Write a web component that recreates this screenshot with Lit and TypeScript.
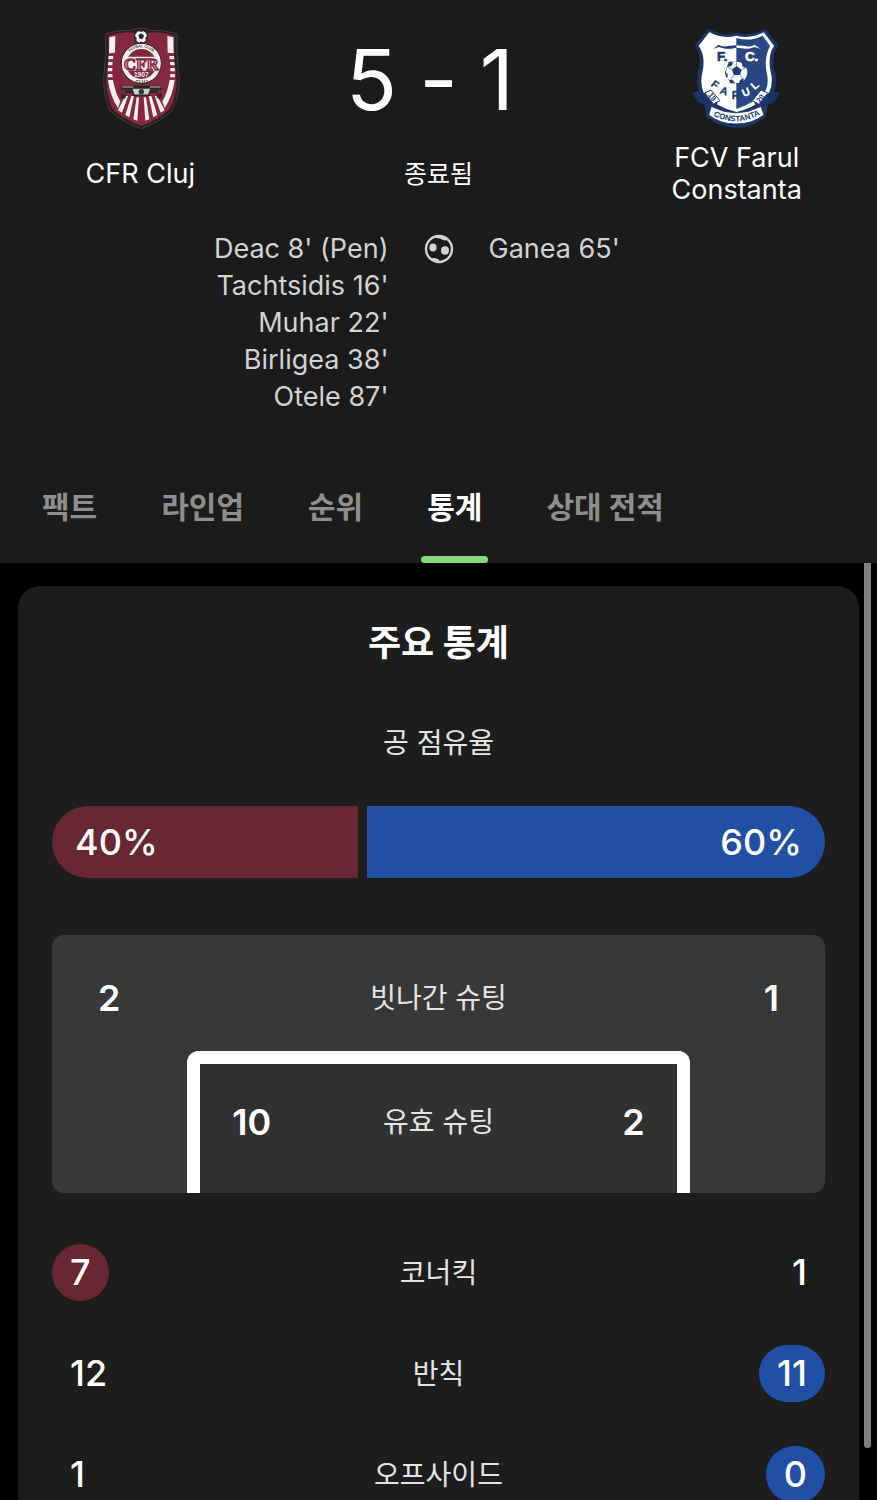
import { LitElement, html, css } from "lit";
import { customElement, property, state } from "lit/decorators.js";
import { classMap } from "lit/directives/class-map.js";

interface Stat {
  label: string;
  home: number;
  away: number;
  leader: "home" | "away";
}

const HOME_SCORERS = ["Deac 8' (Pen)", "Tachtsidis 16'", "Muhar 22'", "Birligea 38'", "Otele 87'"];
const AWAY_SCORERS = ["Ganea 65'"];
const TABS = ["팩트", "라인업", "순위", "통계", "상대 전적"];
const POSSESSION = { home: 40, away: 60 };
const STATS: Stat[] = [
  { label: "코너킥", home: 7, away: 1, leader: "home" },
  { label: "반칙", home: 12, away: 11, leader: "away" },
  { label: "오프사이드", home: 1, away: 0, leader: "away" },
];

const clujCrest = html`
  <svg width="100" height="120" viewBox="0 0 300 360" role="img" aria-label="CFR Cluj">
    <path d="M46 42Q90 28 120 32Q152 16 184 32Q214 28 262 42Q258 90 265 150Q276 215 246 272Q210 306 154 326Q96 306 60 272Q34 215 43 150Q50 90 46 42Z" fill="#2a1f22" stroke="#55494c" stroke-width="2"/>
    <path d="M54 48Q92 34 130 38L176 38Q214 34 254 48Q250 94 257 152Q267 212 240 266Q206 298 154 318Q100 298 67 266Q42 212 51 152Q58 94 54 48Z" fill="#85283f"/>
    <path d="M58 52L76 48L75 98L57 100ZM56 108L70 108L69 118L55 118ZM55 126L68 126L67 136L54 136ZM54 144L67 144L67 154L53 154ZM54 162L67 162L68 172L53 172ZM54 180L69 180Q76 220 91 244L84 264Q60 228 54 180Z" fill="#f4eff0"/>
    <path d="M250 52L232 48L233 98L251 100ZM252 108L238 108L239 118L253 118ZM253 126L240 126L241 136L254 136ZM254 144L241 144L241 154L255 154ZM254 162L241 162L240 172L255 172ZM254 180L239 180Q232 220 217 244L224 264Q248 228 254 180Z" fill="#f4eff0"/>
    <path d="M106 228L114 228L96 278L84 270ZM124 228L132 228L118 292L106 285ZM140 232L147 232L142 302L130 298ZM161 232L168 232L178 298L166 302ZM176 228L184 228L202 285L190 292ZM194 228L202 228L224 270L212 278Z" fill="#f4eff0"/>
    <circle cx="154" cy="130" r="60" fill="#f4eff0" stroke="#29252a" stroke-width="3"/>
    <circle cx="154" cy="132" r="45" fill="#85283f"/>
    <path d="M98 110H210V152H98Z" fill="#f4eff0"/>
    <path id="clujArc" d="M116 98Q154 66 192 98" fill="none"/>
    <text class="crest-sans" font-size="11" font-weight="700" fill="#333"><textPath href="#clujArc" startOffset="50%" text-anchor="middle">FOTBAL CLUB</textPath></text>
    <text class="crest-serif" x="154" y="149" text-anchor="middle" font-size="51" font-weight="700" fill="#d5a9b4" stroke="#85283f" stroke-width="4">CFR</text>
    <text class="crest-sans" x="154" y="172" text-anchor="middle" font-size="20" font-weight="700" fill="#f4eff0">1907</text>
    <path d="M93 197H215V209H93ZM105 211H204V218H105Z" fill="#27262a"/>
    <text class="crest-sans" x="155" y="191" text-anchor="middle" font-size="14" font-weight="700" fill="#333">CLUJ</text>
    <path d="M124 204H184L176 226H132Z" fill="#ccc" stroke="#27262a" stroke-width="5"/>
    <circle cx="154" cy="215" r="8" fill="#333"/>
    <path d="M96 201H130M180 201H212" stroke="#bbb" stroke-width="3"/>
    <circle cx="100" cy="228" r="8" fill="#312a2f"/><circle cx="208" cy="228" r="8" fill="#312a2f"/>
    <circle cx="153" cy="50" r="20" fill="#fff" stroke="#302b2e" stroke-width="4"/>
    <path d="M145 46L153 40L162 46L159 56H148ZM144 32L153 36L162 32L156 30H149ZM134 47L140 53L139 61L134 56ZM172 47L166 53L167 61L172 56ZM148 68L153 64L159 68L154 70Z" fill="#29262a"/>
  </svg>`;

const farulCrest = html`
  <svg width="110" height="120" viewBox="5 0 330 360" role="img" aria-label="FCV Farul Constanta">
    <path d="M84 26Q124 50 168 38Q212 50 254 26L294 76Q270 108 284 158Q292 189 281 215L299 219L279 249L263 252L256 290Q214 326 167 323Q118 324 78 290L72 252L55 249L36 218L54 214Q46 184 54 156Q66 106 43 76Z" fill="#1c3566"/>
    <path d="M87 37Q127 58 168 47Q211 58 250 37L281 77Q260 112 272 160Q279 190 266 219Q235 260 168 276Q104 260 70 218Q58 188 66 158Q77 108 55 77Z" fill="#fff"/>
    <path d="M168 54Q210 66 247 47L269 78Q249 116 260 163Q266 190 256 211Q226 248 168 267Z" fill="#284684"/>
    <path d="M98 86L116 74Q128 83 142 78L167 76V83Q148 88 134 86L116 81Z" fill="#203c76"/>
    <path d="M169 76L196 78Q210 83 222 74L240 86L222 81Q208 88 196 86L169 83Z" fill="#fff"/>
    <g class="crest-sans" font-size="40" font-weight="700" stroke-width="2">
      <text x="110" y="124" fill="#203c76" stroke="#203c76">F.</text>
      <text x="194" y="124" fill="#fff" stroke="#fff">C.</text>
    </g>
    <path d="M146 125L190 125L203 157L188 190L150 190L134 157Z" fill="#203c76"/>
    <circle cx="169" cy="157" r="32" fill="#fff"/>
    <path d="M155 148L169 138L184 149L179 165H160ZM146 125L158 130L153 138L141 141ZM184 126L196 136L199 145L187 140ZM134 155L142 163L142 173L136 170ZM146 181L157 179L164 190L154 189ZM179 180L191 175L188 187L176 191Z" fill="#203c76"/>
    <path d="M169 138V126M184 149L195 143M179 165L188 178M160 165L151 180M155 148L143 142" stroke="#7c8eb3" stroke-width="3"/>
    <g class="crest-sans" font-size="32" font-weight="700" stroke-width="1">
      <text transform="translate(90 196) rotate(38)" fill="#203c76" stroke="#203c76">F</text>
      <text transform="translate(117 220) rotate(18)" fill="#203c76" stroke="#203c76">A</text>
      <text x="154" y="236" fill="#203c76" stroke="#203c76">R</text>
      <text transform="translate(190 231) rotate(-22)" fill="#fff" stroke="#fff">U</text>
      <text transform="translate(223 211) rotate(-42)" fill="#fff" stroke="#fff">L</text>
    </g>
    <path d="M48 224L72 218L99 247L113 244L105 266L83 265L82 249L64 244Z" fill="#1c3566"/>
    <path d="M286 223L264 219L235 247L221 244L229 266L250 265L252 249L270 244Z" fill="#1c3566"/>
    <path d="M74 218L92 210L119 242L99 252Z" fill="#fff" stroke="#203c76" stroke-width="3"/>
    <path d="M262 218L242 210L216 242L237 253Z" fill="#fff" stroke="#203c76" stroke-width="3"/>
    <text class="crest-sans" transform="translate(82 226) rotate(50)" font-size="22" font-weight="700" fill="#203c76">19</text>
    <text class="crest-sans" transform="translate(238 250) rotate(-52)" font-size="22" font-weight="700" fill="#203c76">20</text>
    <path d="M93 259Q167 298 242 259L251 285Q214 313 167 312Q120 313 85 285Z" fill="#fff" stroke="#203c76" stroke-width="3"/>
    <path id="farulArc" d="M92 283Q167 327 246 279" fill="none"/>
    <text class="crest-sans" font-size="24" font-weight="700" fill="#203c76"><textPath href="#farulArc" startOffset="50%" text-anchor="middle">CONSTANTA</textPath></text>
  </svg>`;

const ballIcon = html`
  <svg width="30" height="30" viewBox="0 0 30 30" role="img" aria-label="골">
    <circle cx="15" cy="15" r="13" fill="none" stroke="#d2d2d2" stroke-width="2.4"/>
    <path d="M11 2H20L24 6L20 6.500L16 4.500L12 4ZM8 24L11 24L15 25.500L15 28L10 28Z" fill="#d2d2d2"/>
    <ellipse cx="9" cy="13.500" rx="3.600" ry="4" fill="#d2d2d2"/>
    <ellipse cx="21" cy="16.500" rx="4" ry="4.200" fill="#d2d2d2"/>
  </svg>`;

@customElement("match-header")
class MatchHeader extends LitElement {
  static styles = css`
    :host { display: block; color: #fff; padding-top: 20px; }
    .teams { display: grid; grid-template-columns: 32fr 36fr 32fr; }
    .side { display: grid; grid-template-rows: 120px 64px; justify-items: center; align-items: center; row-gap: 2px; text-align: center; }
    .name { font-size: 27px; line-height: 32px; font-weight: 400; margin: 0; padding: 0 40px; }
    .score { display: grid; grid-template-columns: 1fr auto 1fr; column-gap: 22px; width: 100%; font-size: 84px; line-height: 96px; }
    .score span:first-child { text-align: right; }
    .score span:last-child { text-align: left; }
    .status { font-size: 25px; line-height: 32px; }
    .goals { display: grid; grid-template-columns: 1fr 100px 1fr; margin-top: 24px; font-size: 27px; line-height: 37px; color: #d2d2d2; }
    ul { list-style: none; margin: 0; padding: 0; }
    .home { text-align: right; }
    .ball { display: flex; justify-content: center; align-items: center; height: 37px; }
    svg { display: block; }
    .crest-sans { font-family: "Liberation Sans", Arial, sans-serif; }
    .crest-serif { font-family: "Liberation Serif", serif; }
  `;
  render() {
    return html`
      <div class="teams">
        <div class="side">${clujCrest}<h2 class="name">CFR Cluj</h2></div>
        <div class="side">
          <div class="score"><span>5</span><span>-</span><span>1</span></div>
          <div class="status">종료됨</div>
        </div>
        <div class="side">${farulCrest}<h2 class="name">FCV Farul Constanta</h2></div>
      </div>
      <div class="goals">
        <ul class="home">${HOME_SCORERS.map((s) => html`<li>${s}</li>`)}</ul>
        <div class="ball">${ballIcon}</div>
        <ul>${AWAY_SCORERS.map((s) => html`<li>${s}</li>`)}</ul>
      </div>`;
  }
}

@customElement("match-tabs")
class MatchTabs extends LitElement {
  @state() active = 3;
  static styles = css`
    :host { display: block; }
    .tabs { display: flex; gap: 52px; padding: 0 36px; height: 112px; }
    .tab { display: flex; flex-direction: column; justify-content: space-between; padding-top: 36px; }
    button { font: inherit; font-size: 30px; line-height: 40px; font-weight: 700; color: #8e8e8e; background: none; border: 0; padding: 0 6px; white-space: nowrap; cursor: pointer; }
    .on { color: #fff; }
    .bar { height: 7px; border-radius: 4px; }
    .on + .bar { background: #86d97c; }
  `;
  render() {
    return html`<nav class="tabs" role="tablist">
      ${TABS.map((t, i) => html`<div class="tab">
        <button role="tab" aria-selected=${i === this.active} class=${classMap({ on: i === this.active })} @click=${() => (this.active = i)}>${t}</button>
        <div class="bar"></div>
      </div>`)}
    </nav>`;
  }
}

@customElement("stat-row")
class StatRow extends LitElement {
  @property({ attribute: false }) stat!: Stat;
  static styles = css`
    :host { display: grid; grid-template-columns: 1fr auto 1fr; align-items: center; height: 57px; line-height: 56px; }
    .label { font-size: 28px; color: #e4e4e4; }
    .value { font-size: 36px; font-weight: 500; line-height: 57px; padding: 0 18px; border-radius: 29px; color: #fff; justify-self: start; }
    .away { justify-self: end; }
    .home.lead { background: #672733; }
    .away.lead { background: #204fa3; }
  `;
  render() {
    const s = this.stat;
    return html`
      <span class=${classMap({ value: true, home: true, lead: s.leader === "home" })}>${s.home}</span>
      <span class="label">${s.label}</span>
      <span class=${classMap({ value: true, away: true, lead: s.leader === "away" })}>${s.away}</span>`;
  }
}

@customElement("stats-card")
class StatsCard extends LitElement {
  static styles = css`
    :host { display: block; background: #1d1d1d; border-radius: 22px 22px 0 0; padding: 32px 34px 44px; color: #fff; }
    h1 { margin: 0; font-size: 36px; line-height: 50px; font-weight: 700; text-align: center; }
    .caption { margin: 54px 0 42px; font-size: 28px; line-height: 42px; text-align: center; color: #e4e4e4; }
    .possession { display: grid; column-gap: 9px; font-size: 36px; line-height: 72px; font-weight: 500; }
    .part { padding: 0 23px; }
    .part.home { background: #672733; border-radius: 36px 0 0 36px; }
    .part.away { background: #204fa3; border-radius: 0 36px 36px 0; text-align: right; }
    .shots { margin: 57px 0 51px; background: #383838; border-radius: 12px; padding-top: 34px; }
    .line { display: grid; grid-template-columns: 1fr auto 1fr; align-items: center; line-height: 58px; font-size: 36px; font-weight: 600; }
    .line span:last-child { text-align: right; }
    .line .label { font-size: 28px; font-weight: 400; color: #e4e4e4; }
    .wide { padding: 0 46px; }
    .goal { margin: 24px auto 0; width: 65%; box-sizing: border-box; border: 13px solid #fff; border-bottom: 0; border-radius: 12px 12px 0 0; background: #313131; padding: 29px 32px 42px; }
    .rows { display: grid; gap: 44px; }
  `;
  render() {
    return html`
      <h1>주요 통계</h1>
      <p class="caption">공 점유율</p>
      <div class="possession" style="grid-template-columns:${POSSESSION.home}fr ${POSSESSION.away}fr">
        <div class="part home">${POSSESSION.home}%</div>
        <div class="part away">${POSSESSION.away}%</div>
      </div>
      <section class="shots">
        <div class="line wide"><span>2</span><span class="label">빗나간 슈팅</span><span>1</span></div>
        <div class="goal"><div class="line"><span>10</span><span class="label">유효 슈팅</span><span>2</span></div></div>
      </section>
      <div class="rows">${STATS.map((s) => html`<stat-row .stat=${s}></stat-row>`)}</div>`;
  }
}

@customElement("app-root")
class AppRoot extends LitElement {
  static styles = css`
    :host { display: flex; flex-direction: column; height: 100vh; overflow: hidden; background: #000; font-family: Inter, "Noto Sans CJK KR", sans-serif; }
    header { background: #1b1b1b; flex: none; display: grid; row-gap: 36px; }
    main { position: relative; flex: 1; min-height: 0; overflow: hidden; padding: 23px 18px 0; }
    .thumb { position: absolute; top: 0; right: 6px; width: 7px; height: 94.4%; background: #808080; border-radius: 0 0 4px 4px; }
  `;
  render() {
    return html`
      <header><match-header></match-header><match-tabs></match-tabs></header>
      <main><stats-card></stats-card><div class="thumb"></div></main>`;
  }
}
